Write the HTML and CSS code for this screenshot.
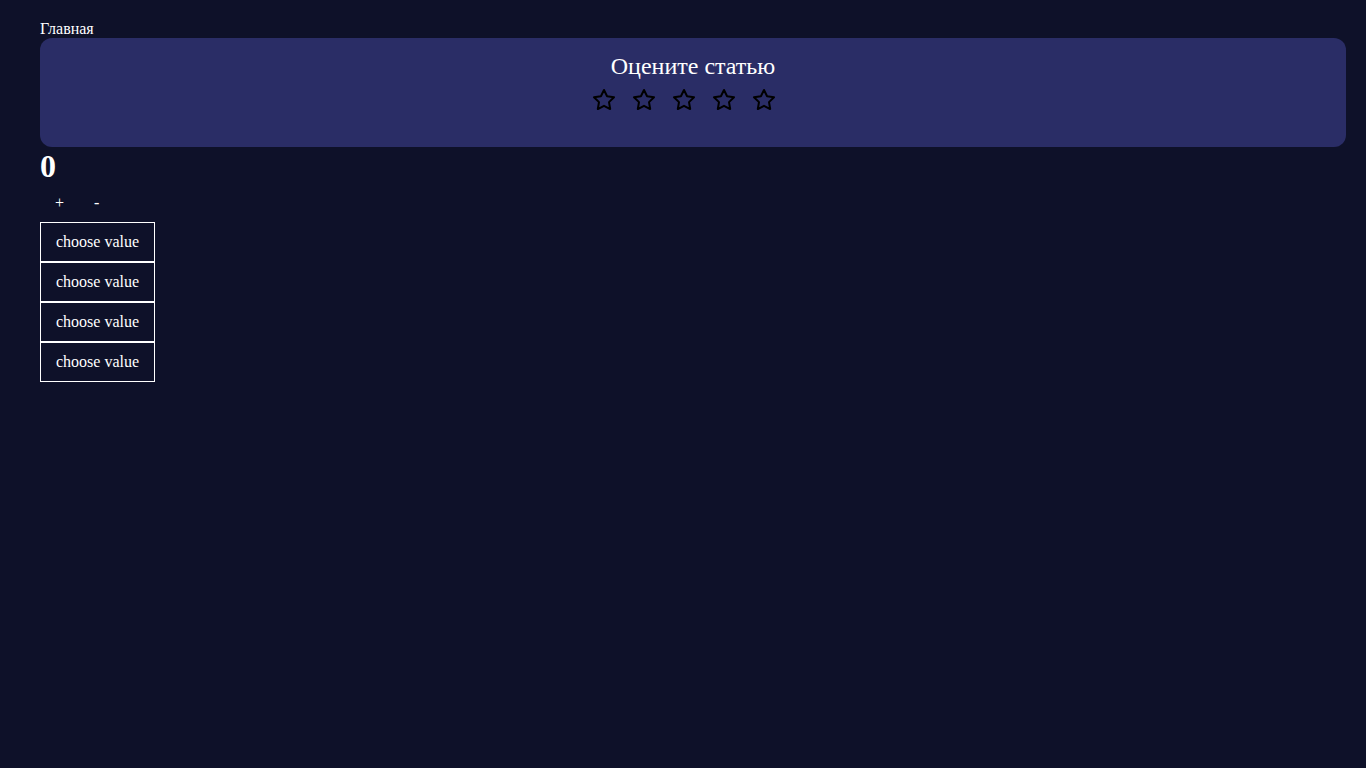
FILE: index.html
```html
<!DOCTYPE html>
<html lang="ru">
<head>
<meta charset="utf-8">
<title>Главная</title>
<link rel="stylesheet" href="styles.css">
</head>
<body>
<div class="app">
  <nav class="nav">Главная</nav>
  <section class="rating">
    <h2 class="rating-title">Оцените статью</h2>
    <div class="stars">
      <svg class="star" viewBox="0 0 24 24" width="24" height="24"><polygon points="12 2 15.09 8.26 22 9.27 17 14.14 18.18 21.02 12 17.77 5.82 21.02 7 14.14 2 9.27 8.91 8.26 12 2"/></svg>
      <svg class="star" viewBox="0 0 24 24" width="24" height="24"><polygon points="12 2 15.09 8.26 22 9.27 17 14.14 18.18 21.02 12 17.77 5.82 21.02 7 14.14 2 9.27 8.91 8.26 12 2"/></svg>
      <svg class="star" viewBox="0 0 24 24" width="24" height="24"><polygon points="12 2 15.09 8.26 22 9.27 17 14.14 18.18 21.02 12 17.77 5.82 21.02 7 14.14 2 9.27 8.91 8.26 12 2"/></svg>
      <svg class="star" viewBox="0 0 24 24" width="24" height="24"><polygon points="12 2 15.09 8.26 22 9.27 17 14.14 18.18 21.02 12 17.77 5.82 21.02 7 14.14 2 9.27 8.91 8.26 12 2"/></svg>
      <svg class="star" viewBox="0 0 24 24" width="24" height="24"><polygon points="12 2 15.09 8.26 22 9.27 17 14.14 18.18 21.02 12 17.77 5.82 21.02 7 14.14 2 9.27 8.91 8.26 12 2"/></svg>
    </div>
  </section>
  <h1 class="counter">0</h1>
  <div class="controls">
    <button class="ctl">+</button>
    <button class="ctl">-</button>
  </div>
  <div class="list">
    <div class="item">choose value</div>
    <div class="item">choose value</div>
    <div class="item">choose value</div>
    <div class="item">choose value</div>
  </div>
</div>
</body>
</html>
```
FILE: styles.css
```css
html, body {
  margin: 0;
  background: #0e1129;
  color: #ffffff;
  font-family: "Liberation Serif", "Times New Roman", serif;
  font-size: 16px;
}
.app {
  padding: 20px 20px 0 40px;
  display: flex;
  flex-direction: column;
  align-items: flex-start;
}
.nav {
  line-height: 18px;
}
.rating {
  align-self: stretch;
  background: #2a2d66;
  border-radius: 12px;
  padding: 14px 0 35px;
  display: flex;
  flex-direction: column;
  align-items: center;
}
.rating-title {
  margin: 0;
  font-size: 24px;
  font-weight: normal;
  line-height: 28px;
}
.stars {
  display: flex;
  margin-top: 8px;
  transform: translateX(-1px);
}
.star {
  fill: none;
  stroke: #000;
  stroke-width: 2;
  stroke-linejoin: round;
  stroke-linecap: round;
  margin-right: 16px;
}
.counter {
  margin: 0;
  font-size: 32px;
  font-weight: bold;
  line-height: 38px;
}
.controls {
  display: flex;
  margin-bottom: 5px;
}
.ctl {
  background: none;
  border: none;
  color: #fff;
  font-family: inherit;
  font-size: 16px;
  line-height: 18px;
  padding: 9px 15px 5px;
  cursor: pointer;
}
.list {
  display: flex;
  flex-direction: column;
}
.item {
  border: 1px solid #fff;
  padding: 10px 15px;
  line-height: 18px;
}
```
